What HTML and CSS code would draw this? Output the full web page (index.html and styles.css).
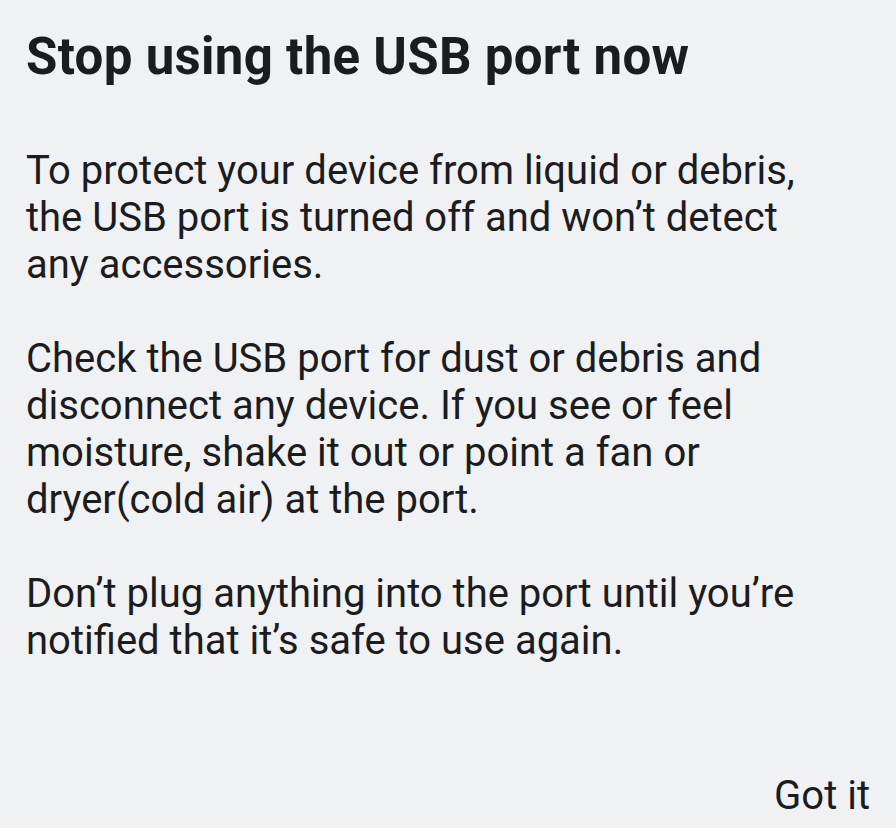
FILE: index.html
```
<!DOCTYPE html>
<html lang="en">
<head>
  <meta charset="UTF-8">
  <meta name="viewport" content="width=device-width, initial-scale=1.0">
  <title>Stop using the USB port now</title>
  <link rel="stylesheet" href="styles.css">
</head>
<body>
  <div class="dialog">
    <h1 class="title">Stop using the USB port now</h1>
    <div class="message">
      <p>To protect your device from liquid or debris, the USB port is turned off and won’t detect any accessories.</p>
      <p>Check the USB port for dust or debris and disconnect any device. If you see or feel moisture, shake it out or point a fan or dryer(cold air) at the port.</p>
      <p>Don’t plug anything into the port until you’re notified that it’s safe to use again.</p>
    </div>
    <div class="actions">
      <button class="btn">Got it</button>
    </div>
  </div>
</body>
</html>
```

FILE: styles.css
```
html, body {
  margin: 0;
  height: 100%;
}
body {
  background: #f0f1f3;
  color: #1b1c1e;
  font-family: Roboto, "Liberation Sans", sans-serif;
}
.dialog {
  height: 100%;
  box-sizing: border-box;
  display: flex;
  flex-direction: column;
  padding: 22px 26px 0 26px;
}
.title {
  margin: 0;
  font-size: 51px;
  font-weight: 700;
  line-height: 70px;
  letter-spacing: 0.3px;
}
.message {
  margin-top: 55px;
  max-width: 800px;
}
.message p {
  margin: 0 0 47px 0;
  font-size: 40px;
  line-height: 47px;
}
.actions {
  margin-top: auto;
  display: flex;
  justify-content: flex-end;
  padding-bottom: 9px;
}
.btn {
  background: none;
  border: none;
  padding: 0;
  font-family: Roboto, "Liberation Sans", sans-serif;
  font-size: 40px;
  line-height: 47px;
  color: #1b1c1e;
}
```
